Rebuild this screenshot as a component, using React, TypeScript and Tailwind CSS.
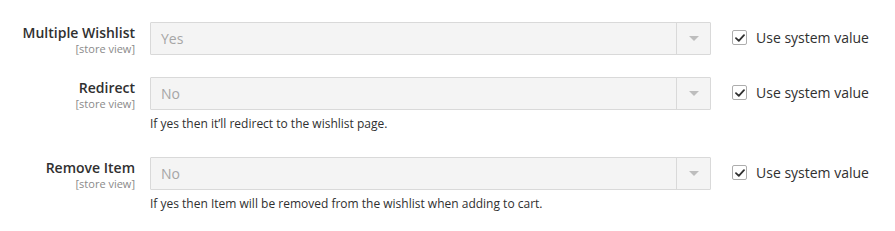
import React from 'react';

type Field = {
  label: string;
  value: string;
  note?: string;
};

const FIELDS: Field[] = [
  { label: 'Multiple Wishlist', value: 'Yes' },
  { label: 'Redirect', value: 'No', note: 'If yes then it\u2019ll redirect to the wishlist page.' },
  { label: 'Remove Item', value: 'No', note: 'If yes then Item will be removed from the wishlist when adding to cart.' },
];

function CheckIcon() {
  return (
    <svg width="10" height="8" viewBox="0 0 10 8" fill="none">
      <path d="M1 4.2 L3.8 6.8 L9 1.2" stroke="#303030" strokeWidth="1.8" strokeLinecap="round" strokeLinejoin="round" />
    </svg>
  );
}

function FieldRow({ field }: { field: Field }) {
  return (
    <div className={`flex ${field.note ? 'mb-[25px]' : 'mb-[22px]'}`}>
      {/* Label */}
      <div className="w-[135px] shrink-0 text-right">
        <div className="text-[14px] leading-[18px] font-semibold text-[#303030] pt-[2px]">{field.label}</div>
        <div className="text-[11px] leading-[13px] text-[#8a8a8a]">[store view]</div>
      </div>

      {/* Control */}
      <div className="w-[561px] shrink-0 ml-[15px]">
        <div className="flex h-[33px] border border-[#d9d9d9] bg-[#f4f4f4] rounded-[1px]">
          <div className="flex-1 flex items-center pl-[10px] text-[14px] text-[#a6a6a6]">{field.value}</div>
          <div className="w-[34px] border-l border-[#d9d9d9] flex items-center justify-center">
            <div className="w-0 h-0 border-l-[5px] border-r-[5px] border-t-[5px] border-l-transparent border-r-transparent border-t-[#bdbdbd]" />
          </div>
        </div>
        {field.note && (
          <div className="text-[12px] leading-[16px] text-[#303030] mt-[6px]">{field.note}</div>
        )}
      </div>

      {/* Use system value */}
      <div className="ml-[21px] flex items-start pt-[7px]">
        <div className="w-[15px] h-[15px] border border-[#adadad] rounded-[2px] bg-white flex items-center justify-center shrink-0 mt-[1px]">
          <CheckIcon />
        </div>
        <span className="ml-[9px] text-[14px] leading-[18px] text-[#303030]">Use system value</span>
      </div>
    </div>
  );
}

export default function App() {
  return (
    <div className="w-[895px] h-[231px] bg-white pt-[22px] overflow-hidden" style={{ fontFamily: '"Open Sans", sans-serif' }}>
      {FIELDS.map((f) => (
        <FieldRow key={f.label} field={f} />
      ))}
    </div>
  );
}
